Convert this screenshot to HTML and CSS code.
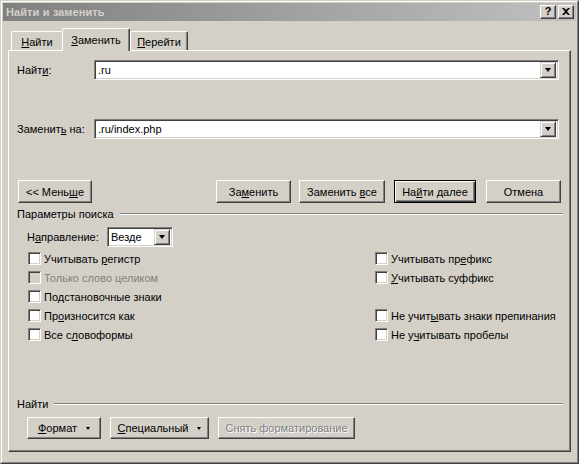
FILE: index.html
```html
<!DOCTYPE html>
<html lang="ru">
<head>
<meta charset="utf-8">
<title>Найти и заменить</title>
<link rel="stylesheet" href="styles.css">
</head>
<body>
<div class="window">
  <div class="frame">
    <div class="titlebar">
      <span class="title">Найти и заменить</span>
      <div class="tbtns">
        <span class="tbtn help">?</span>
        <span class="tbtn close"><svg width="8" height="7" viewBox="0 0 8 7"><path d="M0 0 L2 0 L4 2 L6 0 L8 0 L5 3.5 L8 7 L6 7 L4 5 L2 7 L0 7 L3 3.5 Z" fill="#000"/></svg></span>
      </div>
    </div>
    <div class="client">
      <div class="tabs">
        <div class="tab t1"><span><u>Н</u>айти</span></div>
        <div class="tab t2 sel"><span><u>З</u>аменить</span></div>
        <div class="tab t3"><span><u>П</u>ерейти</span></div>
      </div>
      <div class="panel">
        <div class="field first">
          <span class="flabel">Найт<u>и</u>:</span>
          <div class="combo wide"><span class="ctext">.ru</span><span class="dd"><i class="arrow"></i></span></div>
        </div>
        <div class="field second">
          <span class="flabel">Заменит<u>ь</u> на:</span>
          <div class="combo wide"><span class="ctext">.ru/index.php</span><span class="dd"><i class="arrow"></i></span></div>
        </div>
        <div class="btnrow">
          <span class="btn less"><span>&lt;&lt; Мень<u>ш</u>е</span></span>
          <div class="btngroup">
            <span class="btn b-rep"><span>За<u>м</u>енить</span></span>
            <span class="btn b-all"><span>Заменить <u>в</u>се</span></span>
            <span class="btn b-next def"><span>На<u>й</u>ти далее</span></span>
            <span class="btn b-cancel"><span>Отмена</span></span>
          </div>
        </div>
        <div class="group g1"><span class="gtext">Параметры поиска</span><span class="gline"></span></div>
        <div class="dirrow">
          <span class="dlabel">Н<u>а</u>правление:</span>
          <div class="combo dir"><span class="ctext">Везде</span><span class="dd"><i class="arrow"></i></span></div>
        </div>
        <div class="opts">
          <div class="col left">
            <div class="opt"><span class="cb"></span><span>Учитывать <u>р</u>егистр</span></div>
            <div class="opt dis"><span class="cb"></span><span>Только слово целиком</span></div>
            <div class="opt"><span class="cb"></span><span>Подстановочные знаки</span></div>
            <div class="opt"><span class="cb"></span><span>Пр<u>о</u>износится как</span></div>
            <div class="opt"><span class="cb"></span><span>Все с<u>л</u>овоформы</span></div>
          </div>
          <div class="col right">
            <div class="opt"><span class="cb"></span><span>Учитывать пр<u>е</u>фикс</span></div>
            <div class="opt"><span class="cb"></span><span><u>У</u>читывать суффикс</span></div>
            <div class="opt empty"></div>
            <div class="opt"><span class="cb"></span><span>Не учит<u>ы</u>вать знаки препинания</span></div>
            <div class="opt"><span class="cb"></span><span>Не у<u>ч</u>итывать пробелы</span></div>
          </div>
        </div>
        <div class="group g2"><span class="gtext">Найти</span><span class="gline"></span></div>
        <div class="btnrow2">
          <span class="btn b-fmt"><span><u>Ф</u>ормат</span><i class="arrow small"></i></span>
          <span class="btn b-spec"><span><u>С</u>пециальный</span><i class="arrow small"></i></span>
          <span class="btn b-clr disabled"><span>Снять форматирование</span></span>
        </div>
      </div>
    </div>
  </div>
</div>
</body>
</html>
```
FILE: styles.css
```css
* { box-sizing: border-box; }
html, body { margin: 0; padding: 0; }
body {
  width: 579px;
  height: 464px;
  background: #d4d0c8;
  font-family: "Liberation Sans", Arial, sans-serif;
  font-size: 11px;
  color: #000;
  overflow: hidden;
}
u { text-decoration: underline; text-underline-offset: 1px; }

.window {
  width: 579px;
  height: 464px;
  border: 1px solid;
  border-color: #d4d0c8 #404040 #404040 #d4d0c8;
}
.frame {
  height: 100%;
  border: 1px solid;
  border-color: #ffffff #808080 #808080 #ffffff;
  padding: 1px;
  display: flex;
  flex-direction: column;
}

.titlebar {
  height: 18px;
  background: linear-gradient(to right, #808080, #c0c0c0);
  display: flex;
  align-items: center;
  justify-content: space-between;
  padding: 0 2px 0 3px;
}
.title {
  color: #d4d0c8;
  font-weight: bold;
  font-size: 11px;
  letter-spacing: 0.1px;
}
.tbtns { display: flex; gap: 2px; }
.tbtn {
  width: 16px;
  height: 14px;
  background: #d4d0c8;
  border: 1px solid;
  border-color: #ffffff #404040 #404040 #ffffff;
  box-shadow: inset -1px -1px #808080;
  display: flex;
  align-items: center;
  justify-content: center;
  font-weight: bold;
  font-size: 11px;
  line-height: 1;
}
.tbtn.help { padding-bottom: 1px; }
.tbtn.close svg { display: block; margin-bottom: 1px; }

.client {
  flex: 1;
  display: flex;
  flex-direction: column;
  padding: 7px 5px 9px 5px;
}

.tabs {
  height: 22px;
  display: flex;
  align-items: flex-end;
  padding-left: 3px;
  position: relative;
  z-index: 2;
}
.tab {
  height: 19px;
  border: 1px solid;
  border-bottom: none;
  border-color: #ffffff #404040 transparent #ffffff;
  box-shadow: inset -1px 0 #808080;
  border-radius: 2px 2px 0 0;
  display: flex;
  align-items: center;
  justify-content: center;
  padding-top: 1px;
  background: #d4d0c8;
}
.t1 { width: 51px; border-right: none; box-shadow: none; }
.t2 { width: 68px; }
.t3 { width: 58px; }
.tab.sel {
  height: 23px;
  margin-bottom: -1px;
  padding-bottom: 2px;
}

.panel {
  flex: 1;
  border: 1px solid;
  border-color: #ffffff #404040 #404040 #ffffff;
  box-shadow: inset -1px -1px #808080;
  padding: 0 11px 0 8px;
  display: flex;
  flex-direction: column;
  position: relative;
  z-index: 1;
}

.field {
  height: 20px;
  display: flex;
  align-items: center;
}
.field.first { margin-top: 9px; }
.field.second { margin-top: 39px; }
.flabel { width: 77px; flex: none; }

.combo {
  height: 20px;
  background: #fff;
  border: 1px solid;
  border-color: #808080 #ffffff #ffffff #808080;
  box-shadow: inset 1px 1px #404040, inset -1px -1px #d4d0c8;
  display: flex;
  align-items: center;
  padding: 2px;
}
.combo.wide { flex: 1; }
.ctext { flex: 1; padding-left: 1px; white-space: nowrap; }
.dd {
  width: 16px;
  height: 16px;
  flex: none;
  background: #d4d0c8;
  border: 1px solid;
  border-color: #d4d0c8 #404040 #404040 #d4d0c8;
  box-shadow: inset 1px 1px #ffffff, inset -1px -1px #808080;
  display: flex;
  align-items: center;
  justify-content: center;
}
.arrow {
  display: block;
  width: 0;
  height: 0;
  border-left: 3.5px solid transparent;
  border-right: 3.5px solid transparent;
  border-top: 4px solid #000;
}
.arrow.small {
  border-left-width: 2.5px;
  border-right-width: 2.5px;
  border-top-width: 3px;
  margin-left: 9px;
}

.btnrow {
  margin-top: 41px;
  height: 23px;
  display: flex;
  justify-content: space-between;
  margin-right: -2px;
  margin-left: 1px;
}
.btngroup { display: flex; }
.btn {
  height: 23px;
  background: #d4d0c8;
  border: 1px solid;
  border-color: #ffffff #404040 #404040 #ffffff;
  box-shadow: inset -1px -1px #808080;
  display: flex;
  align-items: center;
  justify-content: center;
  white-space: nowrap;
  flex: none;
}
.btn.def {
  border: 1px solid #000;
  box-shadow: inset 1px 1px #ffffff, inset -1px -1px #404040, inset -2px -2px #808080;
}
.less { width: 74px; }
.b-rep { width: 75px; margin-right: 8px; }
.b-all { width: 86px; margin-right: 9px; }
.b-next { width: 82px; margin-right: 10px; }
.b-cancel { width: 75px; }

.group {
  height: 13px;
  display: flex;
  align-items: center;
  margin-right: -4px;
}
.g1 { margin-top: 4px; }
.g2 { margin-top: 53px; }
.gtext { flex: none; padding-right: 6px; }
.gline {
  flex: 1;
  height: 2px;
  border-top: 1px solid #808080;
  border-bottom: 1px solid #ffffff;
  margin-top: 1px;
}

.dirrow {
  margin-top: 7px;
  height: 20px;
  display: flex;
  align-items: center;
  padding-left: 10px;
}
.dlabel { width: 80px; flex: none; }
.combo.dir { width: 66px; }

.opts {
  margin-top: 2px;
  display: flex;
  padding-left: 11px;
}
.col { display: flex; flex-direction: column; }
.col.left { width: 347px; }
.opt {
  height: 19px;
  display: flex;
  align-items: center;
  white-space: nowrap;
}
.cb {
  width: 13px;
  height: 13px;
  flex: none;
  background: #fff;
  border: 1px solid;
  border-color: #808080 #ffffff #ffffff #808080;
  box-shadow: inset 1px 1px #404040, inset -1px -1px #d4d0c8;
  margin-right: 3px;
}
.opt.dis { color: #808080; }
.opt.dis .cb { background: #d4d0c8; }

.btnrow2 {
  margin-top: 7px;
  height: 22px;
  display: flex;
  gap: 9px;
  padding-left: 10px;
}
.btnrow2 .btn { height: 22px; }
.b-fmt { width: 74px; }
.b-spec { width: 99px; }
.b-clr { width: 137px; }
.btn.disabled { color: #808080; text-shadow: 1px 1px #ffffff; }
```
